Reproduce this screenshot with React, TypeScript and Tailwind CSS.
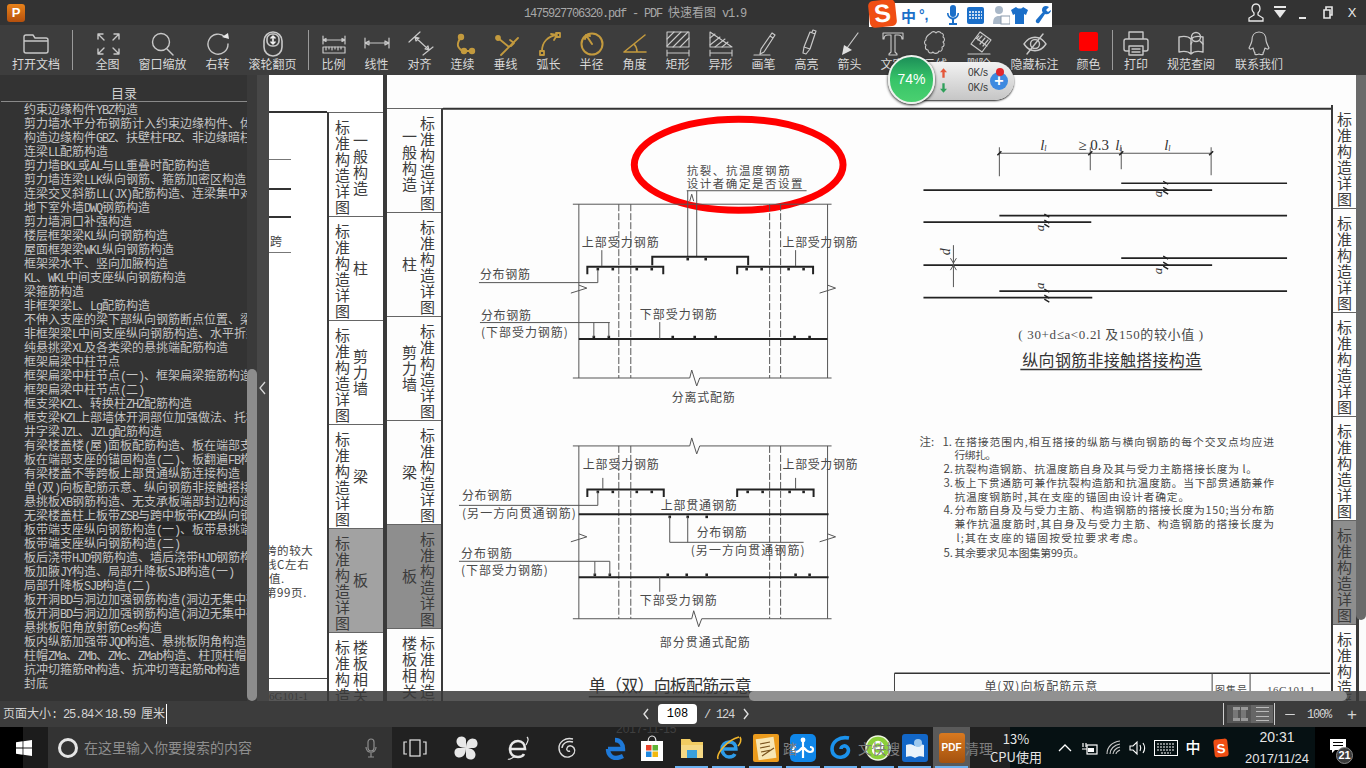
import React from 'react';

const CJK = '"Noto Sans CJK SC", "Liberation Sans", sans-serif';

const tocRows = [
  '约束边缘构件YBZ构造',
  '剪力墙水平分布钢筋计入约束边缘构件、体积配箍率',
  '构造边缘构件GBZ、扶壁柱FBZ、非边缘暗柱',
  '连梁LL配筋构造',
  '剪力墙BKL或AL与LL重叠时配筋构造',
  '剪力墙连梁LLK纵向钢筋、箍筋加密区构造',
  '连梁交叉斜筋LL(JX)配筋构造、连梁集中对角',
  '地下室外墙DWQ钢筋构造',
  '剪力墙洞口补强构造',
  '楼层框架梁KL纵向钢筋构造',
  '屋面框架梁WKL纵向钢筋构造',
  '框架梁水平、竖向加腋构造',
  'KL、WKL中间支座纵向钢筋构造',
  '梁箍筋构造',
  '非框架梁L、Lg配筋构造',
  '不伸入支座的梁下部纵向钢筋断点位置、梁',
  '非框架梁L中间支座纵向钢筋构造、水平折梁',
  '纯悬挑梁XL及各类梁的悬挑端配筋构造',
  '框架扁梁中柱节点',
  '框架扁梁中柱节点(一)、框架扁梁箍筋构造',
  '框架扁梁中柱节点(二)',
  '框支梁KZL、转换柱ZHZ配筋构造',
  '框支梁KZL上部墙体开洞部位加强做法、托柱',
  '井字梁JZL、JZLg配筋构造',
  '有梁楼盖楼(屋)面板配筋构造、板在端部支座',
  '板在端部支座的锚固构造(二)、板翻遍FB构造',
  '有梁楼盖不等跨板上部贯通纵筋连接构造',
  '单(双)向板配筋示意、纵向钢筋非接触搭接',
  '悬挑板XB钢筋构造、无支承板端部封边构造',
  '无梁楼盖柱上板带ZSB与跨中板带KZB纵向钢筋',
  '板带端支座纵向钢筋构造(一)、板带悬挑端',
  '板带端支座纵向钢筋构造(二)',
  '板后浇带HJD钢筋构造、墙后浇带HJD钢筋构造',
  '板加腋JY构造、局部升降板SJB构造(一)',
  '局部升降板SJB构造(二)',
  '板开洞BD与洞边加强钢筋构造(洞边无集中荷载',
  '板开洞BD与洞边加强钢筋构造(洞边无集中荷载',
  '悬挑板阳角放射筋Ces构造',
  '板内纵筋加强带JQD构造、悬挑板阴角构造',
  '柱帽ZMa、ZMb、ZMc、ZMab构造、柱顶柱帽',
  '抗冲切箍筋Rh构造、抗冲切弯起筋Rb构造',
  '封底',
];

const tabRows = [
  { name: '一般构造' },
  { name: '柱' },
  { name: '剪力墙' },
  { name: '梁' },
  { name: '板', active: true },
  { name: '楼板相关', top: true },
];

// SimSun draws latin at half width, so latin runs get squeezed to 6px a char
const Mixed = ({ text }: { text: string }) => (
  <>
    {text.split(/([\x00-\x7f]+)/).map((part, i) =>
      /^[\x00-\x7f]+$/.test(part) ? (
        <span key={i} className="tracking-[-1.2px] font-['Liberation_Mono']">{part}</span>
      ) : (
        <span key={i}>{part}</span>
      )
    )}
  </>
);

const Ico = ({ children, stroke = '#c8c8c8', w = 1.4 }: { children: React.ReactNode; stroke?: string; w?: number }) => (
  <svg width="32" height="32" viewBox="0 0 32 32" fill="none" stroke={stroke} strokeWidth={w} strokeLinecap="round" strokeLinejoin="round">
    {children}
  </svg>
);

const GOLD = '#c39a3e';

const toolbarGroups: { label: string; w: string; icon: React.ReactNode }[][] = [
  [
    {
      label: '打开文档', w: 'w-[72px]', icon: (
        <Ico><path d="M4 12a2 2 0 0 1 2-2h7l2 3h11a2 2 0 0 1 2 2v11a2 2 0 0 1-2 2H6a2 2 0 0 1-2-2zM4 16h24" /></Ico>
      ),
    },
  ],
  [
    {
      label: '全图', w: 'w-[55px]', icon: (
        <Ico><path d="M6 9h5M6 9v5M6 9l6 6M27 9h-5M27 9v5M27 9l-6 6M6 29h5M6 29v-5M6 29l6-6M27 29h-5M27 29v-5M27 29l-6-6" /></Ico>
      ),
    },
    {
      label: '窗口缩放', w: 'w-[55px]', icon: (
        <Ico><circle cx="14" cy="17" r="8.5" /><path d="M20 24l6 6" /></Ico>
      ),
    },
    {
      label: '右转', w: 'w-[55px]', icon: (
        <Ico>
          <path d="M23 12A10 10 0 1 0 26 19" />
          <path d="M20 12l6-4 1 6z" fill="#e8e8e8" stroke="none" />
        </Ico>
      ),
    },
    {
      label: '滚轮翻页', w: 'w-[55px]', icon: (
        <Ico w={1.6}>
          <rect x="7" y="7" width="18" height="24" rx="9" />
          <rect x="10" y="9" width="12" height="12" rx="5" />
          <path d="M16 11v8M14 13l2-2 2 2M14 17l2 2 2-2" stroke="#f0f0f0" />
        </Ico>
      ),
    },
  ],
  [
    {
      label: '比例', w: 'w-[43px]', icon: (
        <Ico w={1.2}>
          <path d="M5 11v8M27 11v8M5 15h22M5 15l3-1.5v3zM27 15l-3-1.5v3z" />
          <rect x="5" y="22" width="22" height="6" />
          <path d="M8 22v3M11 22v2M14 22v3M17 22v2M20 22v3M23 22v2" />
        </Ico>
      ),
    },
    {
      label: '线性', w: 'w-[43px]', icon: (
        <Ico w={1.2}><path d="M4 13v10M28 13v10M4 18h24M4 18l4-2v4zM28 18l-4-2v4z" /></Ico>
      ),
    },
    {
      label: '对齐', w: 'w-[43px]', icon: (
        <Ico w={1.2}><path d="M5 17L16 7M19 30l10-8M11 12l14 13M11 12l1 4 3-3zM25 25l-4-1 3-3z" /></Ico>
      ),
    },
    {
      label: '连续', w: 'w-[43px]', icon: (
        <Ico stroke={GOLD} w={2}>
          <path d="M14 12c-2 3-4 6-3 9 1 3 4 5 6 5h8" />
          <circle cx="14" cy="12" r="2.2" fill={GOLD} />
          <circle cx="17" cy="26" r="2.2" fill={GOLD} />
          <circle cx="25" cy="26" r="2.2" fill={GOLD} />
        </Ico>
      ),
    },
    {
      label: '垂线', w: 'w-[43px]', icon: (
        <Ico stroke={GOLD} w={1.8}>
          <path d="M11 30l17-17M8 13l11 9M20 15l4 3-3 3" />
          <circle cx="8" cy="13" r="2" fill={GOLD} />
        </Ico>
      ),
    },
    {
      label: '弧长', w: 'w-[43px]', icon: (
        <Ico stroke={GOLD} w={1.8}>
          <path d="M9 26c0-9 6-15 15-16M18 9l6 1-3 5" />
          <rect x="7" y="26" width="4" height="4" />
          <rect x="23" y="8" width="4" height="4" />
        </Ico>
      ),
    },
    {
      label: '半径', w: 'w-[43px]', icon: (
        <Ico stroke={GOLD} w={2}>
          <circle cx="16" cy="19" r="10.5" />
          <path d="M16 19L10 10M9 14l1-4 4 1" />
        </Ico>
      ),
    },
    {
      label: '角度', w: 'w-[43px]', icon: (
        <Ico stroke={GOLD} w={1.6}><path d="M5 27h22M5 27L26 10M15 19c2 2 3 5 3 8" /></Ico>
      ),
    },
    {
      label: '矩形', w: 'w-[43px]', icon: (
        <Ico w={1.1}>
          <rect x="5" y="7" width="22" height="15" />
          <path d="M5 14l7-7M5 21l14-14M11 22L26 7M18 22l9-9M5 25v6M27 25v6M5 28h22" />
        </Ico>
      ),
    },
    {
      label: '异形', w: 'w-[43px]', icon: (
        <Ico w={1.1}>
          <path d="M5 7l22 15H5z" />
          <path d="M5 13l5-4M5 20l10-8M10 22l10-8M17 22l6-5M5 25v6M27 25v6M5 28h22" />
        </Ico>
      ),
    },
    {
      label: '画笔', w: 'w-[43px]', icon: (
        <Ico w={1.2}><path d="M24 8l3 2-11 17-4 2 1-5zM22 11l3 2M6 30h16" /></Ico>
      ),
    },
    {
      label: '高亮', w: 'w-[43px]', icon: (
        <Ico w={1.2}><path d="M19 7l5 2-5 15-6-2zM21 7l1-2 3 1-1 3M13 22l-1 6 3 1 4-5" /></Ico>
      ),
    },
    {
      label: '箭头', w: 'w-[43px]', icon: (
        <Ico w={1.2}>
          <path d="M24 8L13 23" />
          <path d="M8 30l2-10 8 5z" fill="#e0e0e0" stroke="none" />
        </Ico>
      ),
    },
    {
      label: '文字', w: 'w-[43px]', icon: (
        <Ico w={1.1}><path d="M6 8h20v6h-1c0-3-1-4-4-4h-3v17l2 2v1h-8v-1l2-2V10h-3c-3 0-4 1-4 4H6z" /></Ico>
      ),
    },
    {
      label: '云线', w: 'w-[43px]', icon: (
        <Ico w={1.1}>
          <path d="M11 8a3 3 0 0 1 5 0 3 3 0 0 1 5 0c2 0 3 2 2 4 2 1 2 4 0 5 2 2 1 5-1 5 1 3-1 5-3 4-1 3-5 3-6 1-2 2-5 1-5-2-3 0-3-3-2-5-2-1-2-4 0-5-1-3 2-5 5-7z" />
        </Ico>
      ),
    },
    {
      label: '删除', w: 'w-[43px]', icon: (
        <Ico w={1.2}>
          <path d="M17 7l11 8-9 12-11-8zM13 13l11 8M5 29h22" />
          <path d="M16 11l-2 2M19 11l-4 4M22 13l-5 6M25 15l-5 6" />
        </Ico>
      ),
    },
  ],
  [
    {
      label: '隐藏标注', w: 'w-[69px]', icon: (
        <Ico><path d="M5 19c6-9 16-9 22 0-6 9-16 9-22 0z" /><circle cx="16" cy="19" r="4.5" /><path d="M24 9L8 29" /></Ico>
      ),
    },
    {
      label: '颜色', w: 'w-[39px]', icon: <div className="w-[19px] h-[19px] rounded-[2px] bg-[#ff0000] mt-[1px]" />,
    },
  ],
];

const toolbarEnd = [
  {
    label: '打印', w: 'w-[40px]', icon: (
      <Ico>
        <path d="M9 14V7h14v7M6 14h20a2 2 0 0 1 2 2v8a2 2 0 0 1-2 2h-3M9 26H6a2 2 0 0 1-2-2v-8a2 2 0 0 1 2-2" />
        <rect x="9" y="21" width="14" height="9" />
        <path d="M12 24h8M12 27h8" />
      </Ico>
    ),
  },
  {
    label: '规范查阅', w: 'w-[70px]', icon: (
      <Ico>
        <path d="M16 14c-3-3-8-3-12-2v15c4-1 9-1 12 2 3-3 8-3 12-2V12c-4-1-9-1-12 2zM16 14v15" />
        <circle cx="21" cy="12" r="4.5" />
        <path d="M17 17l-1 2M25 16l3 3" />
      </Ico>
    ),
  },
  {
    label: '联系我们', w: 'w-[66px]', icon: (
      <Ico w={1.2}>
        <path d="M16 7c-5 0-7 4-7 8 0 2-1 4-3 8 1 2 2 1 4 0 1 3 1 4 2 5-1 2 2 2 4 1 2 1 5 1 4-1 1-1 1-2 2-5 2 1 3 2 4 0-2-4-3-6-3-8 0-4-2-8-7-8z" />
      </Ico>
    ),
  },
];

const ToolItem = ({ item }: { item: { label: string; w: string; icon: React.ReactNode } }) => (
  <div className={`${item.w} shrink-0 flex flex-col items-center`}>
    <div className="h-[32px] flex items-center justify-center">{item.icon}</div>
    <span className="h-[14px] leading-[14px] text-[12px] text-[#d8d8d8] whitespace-nowrap">{item.label}</span>
  </div>
);

const Sep = () => <div className="w-px h-[40px] bg-[#9a9a9a] shrink-0 self-center" />;

const TitleBar = () => (
  <div className="h-[25px] bg-[#333333] flex items-center relative shrink-0">
    <div className="ml-[7px] w-[18px] h-[18px] rounded-[3px] bg-gradient-to-b from-[#e8821a] to-[#b5500d] flex items-center justify-center text-white text-[13px] font-bold leading-none font-['Liberation_Sans']">P</div>
    <span className="ml-[499px] text-[12px] text-[#a8a8a8] whitespace-nowrap"><Mixed text="1475927706320.pdf - PDF 快速看图 v1.9" /></span>
    <div className="ml-auto flex items-center text-[#e8e8e8]">
      <svg width="24" height="22" viewBox="0 0 24 22" fill="none" stroke="#e8e8e8" strokeWidth="1.3"><path d="M12 2c-3 0-4 2-4 5 0 2 1 3 2 4v2l-5 3v3h14v-3l-5-3v-2c1-1 2-2 2-4 0-3-1-5-4-5z" /></svg>
      <svg width="22" height="22" viewBox="0 0 22 22" fill="#e8e8e8" className="ml-[1px]"><path d="M5 4h12v2H5zM5 8h12l-6 8z" /></svg>
      <svg width="22" height="22" viewBox="0 0 22 22" fill="#e8e8e8" className="ml-[1px]"><path d="M7 15h7v2H7z" /></svg>
      <svg width="24" height="22" viewBox="0 0 24 22" fill="none" stroke="#e8e8e8" strokeWidth="1.6" className="ml-[1px]"><path d="M9 8h6v8H9zM11 8V5h6v8h-2" /></svg>
      <span className="w-[26px] text-center text-[13px] leading-none mr-[1px] font-['Liberation_Sans']">X</span>
    </div>
  </div>
);

const Toolbar = () => (
  <div className="h-[50px] bg-[#3d3d3d] flex shrink-0">
    <ToolItem item={toolbarGroups[0][0]} />
    <Sep />
    <div className="w-[7px] shrink-0" />
    {toolbarGroups[1].map((t) => <ToolItem key={t.label} item={t} />)}
    <div className="w-[8px] shrink-0" />
    <Sep />
    <div className="w-[3px] shrink-0" />
    {toolbarGroups[2].map((t) => <ToolItem key={t.label} item={t} />)}
    {toolbarGroups[3].map((t) => <ToolItem key={t.label} item={t} />)}
    <div className="w-[4px] shrink-0" />
    <Sep />
    <div className="w-[3px] shrink-0" />
    {toolbarEnd.map((t) => <ToolItem key={t.label} item={t} />)}
  </div>
);

const Sidebar = () => (
  <div className="w-[269px] shrink-0 flex bg-[#333333] overflow-hidden">
    <div className="w-[247px] shrink-0 overflow-hidden">
      <div className="h-[27px] border-b border-[#8a8a8a] flex items-center justify-center text-[13px] text-[#d0d0d0] pt-[10px] ml-px">目录</div>
      {tocRows.map((row, i) => (
        <div
          key={i}
          className={`h-[14px] leading-[14px] text-[12px] text-[#c4c4c4] whitespace-nowrap pl-[24px] ${i === 30 ? 'bg-[linear-gradient(90deg,#333333_21px,#292929_21px)]' : ''}`}
        >
          <Mixed text={row} />
        </div>
      ))}
    </div>
    <div className="w-[10px] shrink-0 bg-[#3a3a3a] flex flex-col justify-end">
      <div className="h-[332px] rounded-full bg-[#8c8c8c]" />
    </div>
    <div className="w-[12px] shrink-0 bg-[#474747] flex flex-col justify-center items-center">
      <svg width="10" height="14" viewBox="0 0 10 14" fill="none" stroke="#d8d8d8" strokeWidth="1.3"><path d="M7 1L2 7l5 6" /></svg>
    </div>
  </div>
);

const VText = ({ text, className = '' }: { text: string; className?: string }) => (
  <div className={`[writing-mode:vertical-rl] text-[15px] leading-[17px] tracking-[1px] w-[17px] whitespace-nowrap ${className}`}>
    {text}
  </div>
);

// side index of a page: the section name and the 标准构造详图 column
const TabCol = ({ side, className }: { side: 'left' | 'right'; className: string }) => (
  <div className={`flex flex-col shrink-0 ${className}`}>
    {tabRows.map((row) => {
      const nameCol = (
        <div className={`flex ${row.top ? 'pt-[7px] items-start' : 'items-center'}`}><VText text={row.name} /></div>
      );
      return (
        <div
          key={row.name}
          className={`h-[104px] shrink-0 border-b border-[#666666] flex gap-[1px] text-[#3c3c3c] ${side === 'left' ? 'pl-[5px]' : 'pl-[14px]'} ${row.active ? (side === 'left' ? 'bg-[#a2a2a2]' : 'bg-[#8e8e8e]') : ''}`}
        >
          {side === 'right' && nameCol}
          <VText text="标准构造详图" className="pt-[7px]" />
          {side === 'left' && nameCol}
        </div>
      );
    })}
  </div>
);

const Txt = ({ x, y, w, s = 12, c = '#4a4a4a', serif, italic, rot, children }: { x: number; y: number; w?: number; s?: number; c?: string; serif?: boolean; italic?: boolean; rot?: number; children: React.ReactNode }) => (
  <text
    x={x}
    y={y}
    dominantBaseline="central"
    fontSize={s}
    fill={c}
    stroke="none"
    fontStyle={italic ? 'italic' : undefined}
    fontFamily={serif ? '"Liberation Serif", "Noto Sans CJK SC", serif' : CJK}
    textLength={w}
    lengthAdjust={w ? 'spacing' : undefined}
    transform={rot ? `rotate(${rot} ${x} ${y})` : undefined}
  >
    {children}
  </text>
);

const Dots = ({ xs, y }: { xs: number[]; y: number }) => (
  <>
    {xs.map((x) => <rect key={x} x={x - 1.3} y={y - 1.3} width="2.6" height="2.6" fill="#222" stroke="none" />)}
  </>
);

const zigH = (x1: number, x2: number, y: number, zx: number) =>
  `M${x1} ${y}H${zx - 3}L${zx - 1} ${y - 8}L${zx + 4} ${y + 8}L${zx + 7} ${y}H${x2}`;

const zigV = (x: number, y: number) => `M${x - 8} ${y + 5}L${x + 8} ${y}L${x} ${y - 3}`;

// the scanned drawing of the page, drawn in screen coordinates
const PageDrawing = () => (
  <svg viewBox="443 75 889 626" className="absolute inset-0 w-full h-full" fill="none" stroke="#555" strokeWidth="1">
    <path d="M443 108.5H1332" stroke="#333" strokeWidth="2" />
    <path d="M895 673.5H1331" stroke="#333" strokeWidth="1.6" />
    <path d="M1213 673.5V701M1251 673.5V701M895 673.5V701" stroke="#444" />

    {/* top detail */}
    <ellipse cx="739" cy="164.500" rx="104.500" ry="45.500" stroke="#ff0000" strokeWidth="7" />
    <Txt x={687} y={170} w={103} s={11.5}>抗裂、抗温度钢筋</Txt>
    <Txt x={687} y={182.5} w={116} s={11.5}>设计者确定是否设置</Txt>
    <path d="M687 190.5H807M688 190.5V256M697 190.5V256" />
    <path d="M690 201l2-7 2 7" />
    <path d="M573 204H832M579 204V378M828 204V378" />
    <path d="M573 378H690L692 370L697 386L700 378H832" />
    <path d="M619 204V378M631 204V378M770 204V378M781 204V378" strokeDasharray="7 2" />
    <path d={zigV(579, 288)} /><path d={zigV(828, 288)} />
    <path d="M587.5 274V266.5H663.5V274M652.5 265V256.5H748.5V265M737.5 274V266.5H813.5V274" stroke="#222" strokeWidth="2" />
    <Dots xs={[598, 613, 637, 652, 747, 762, 789, 804]} y={269} />
    <Dots xs={[688, 706]} y={259} />
    <path d="M579 339H828" stroke="#222" strokeWidth="2" />
    <Dots xs={[594, 609, 673, 695, 716, 795, 810]} y={337} />
    <Txt x={582} y={241} w={77}>上部受力钢筋</Txt>
    <Txt x={783} y={241} w={75}>上部受力钢筋</Txt>
    <path d="M602 250V266M796 250V266" />
    <Txt x={480} y={273} w={50}>分布钢筋</Txt>
    <path d="M479 282.5H598V270" />
    <Txt x={481} y={314} w={50}>分布钢筋</Txt>
    <Txt x={481} y={331} w={87}>(下部受力钢筋)</Txt>
    <path d="M480 322.5H610M594 322.5V337M609 322.5V337" />
    <Txt x={640} y={313} w={77}>下部受力钢筋</Txt>
    <path d="M660 322V339" />
    <Txt x={672} y={397} w={63}>分离式配筋</Txt>

    {/* lower detail */}
    <path d={zigH(573, 832, 446, 693)} />
    <path d={zigH(573, 832, 619, 695)} />
    <path d="M579 446V619M828 446V619" />
    <path d="M619 446V619M631 446V619M770 446V619M781 446V619" strokeDasharray="7 2" />
    <path d={zigV(579, 537)} /><path d={zigV(828, 537)} />
    <path d="M587.5 497V489.5H664V497M737.5 497V489.5H814V497" stroke="#222" strokeWidth="2" />
    <Dots xs={[598, 613, 637, 652, 748, 763, 790, 804]} y={492} />
    <path d="M579 514.5H829M579 577.5H829" stroke="#222" strokeWidth="2" />
    <Dots xs={[670, 688, 707]} y={517} />
    <Dots xs={[595, 610, 668, 687, 707, 796, 810]} y={575} />
    <path d="M670 517V542.5H804M688 517V542.5" />
    <Txt x={697} y={532} w={50}>分布钢筋</Txt>
    <Txt x={691} y={550} w={114}>(另一方向贯通钢筋)</Txt>
    <Txt x={661} y={505} w={76}>上部贯通钢筋</Txt>
    <path d="M459 561.5H610M595 561.5V575M610 561.5V575" />
    <Txt x={461} y={553} w={51}>分布钢筋</Txt>
    <Txt x={461} y={570} w={87}>(下部受力钢筋)</Txt>
    <path d="M459 505.5H598V492" />
    <Txt x={462} y={495} w={50}>分布钢筋</Txt>
    <Txt x={462} y={513} w={114}>(另一方向贯通钢筋)</Txt>
    <Txt x={583} y={464} w={76}>上部受力钢筋</Txt>
    <Txt x={783} y={464} w={75}>上部受力钢筋</Txt>
    <path d="M603 478V489M796 478V489" />
    <Txt x={640} y={600} w={77}>下部受力钢筋</Txt>
    <path d="M660 577V592" />
    <Txt x={660} y={642} w={90}>部分贯通式配筋</Txt>
    <Txt x={589} y={685} w={163} s={17} c="#333">单（双）向板配筋示意</Txt>
    <path d="M589 697H752" stroke="#222" strokeWidth="1.5" />

    {/* right detail */}
    <path d="M1000 153H1212M1000 147V176M1091 147V170M1122 147V169M1212 147V175" />
    <path d="M998 155l4-4M1089 155l4-4M1120 155l4-4M1210 155l4-4" stroke="#222" strokeWidth="1.6" />
    <Txt x={1041} y={145} s={15} c="#333" serif italic>l</Txt>
    <Txt x={1045} y={148} s={8} c="#333" serif italic>l</Txt>
    <Txt x={1079} y={145} s={15} c="#333" serif>≥ 0.3</Txt>
    <Txt x={1116} y={145} s={15} c="#333" serif italic>l</Txt>
    <Txt x={1120} y={148} s={8} c="#333" serif italic>l</Txt>
    <Txt x={1165} y={145} s={15} c="#333" serif italic>l</Txt>
    <Txt x={1169} y={148} s={8} c="#333" serif italic>l</Txt>
    <path d="M1122 183H1288M924 190H1213M1000 215.5H1288M924 222H1092M1122 258H1288M924 265H1213M1000 291H1288M924 297.5H1093" stroke="#222" strokeWidth="1.7" />
    <path d="M954 245V287M951 258l3 5 3-5M951 270l3-5 3 5" />
    <path d="M1164 181l5 3M1164 187l5 3M1164 191l5 3M1045 214l5 3M1045 220l5 3M1045 224l5 3M1164 256l5 3M1164 262l5 3M1164 266l5 3M1045 289l5 3M1045 295l5 3M1045 299l5 3" stroke="#222" strokeWidth="1.4" />
    <Txt x={1158} y={197} s={13} c="#333" serif italic rot={-90}>a</Txt>
    <Txt x={1040} y={231} s={13} c="#333" serif italic rot={-90}>a</Txt>
    <Txt x={1158} y={274} s={13} c="#333" serif italic rot={-90}>a</Txt>
    <Txt x={1040} y={289} s={13} c="#333" serif italic rot={-90}>a</Txt>
    <Txt x={946} y={255} s={14} c="#333" serif italic rot={-90}>d</Txt>
    <Txt x={1019} y={334} w={185} s={13} serif>( 30+d≤a&lt;0.2l 及150的较小值 )</Txt>
    <Txt x={1023} y={359} w={179} s={16} c="#333">纵向钢筋非接触搭接构造</Txt>
    <path d="M1021 369.5H1203" stroke="#333" strokeWidth="1.5" />

    {/* notes */}
    <Txt x={920} y={441} s={11.5}>注:</Txt>
    <Txt x={943} y={441} s={11.5}>1.</Txt>
    <Txt x={955} y={441} w={320} s={10.8}>在搭接范围内,相互搭接的纵筋与横向钢筋的每个交叉点均应进</Txt>
    <Txt x={955} y={454} w={42} s={10.8}>行绑扎。</Txt>
    <Txt x={944} y={468} s={11.5}>2.</Txt>
    <Txt x={955} y={468} w={303} s={10.8}>抗裂构造钢筋、抗温度筋自身及其与受力主筋搭接长度为 l。</Txt>
    <Txt x={944} y={482} s={11.5}>3.</Txt>
    <Txt x={955} y={482} w={320} s={10.8}>板上下贯通筋可兼作抗裂构造筋和抗温度筋。当下部贯通筋兼作</Txt>
    <Txt x={955} y={496} w={235} s={10.8}>抗温度钢筋时,其在支座的锚固由设计者确定。</Txt>
    <Txt x={944} y={509} s={11.5}>4.</Txt>
    <Txt x={955} y={509} w={320} s={10.8}>分布筋自身及与受力主筋、构造钢筋的搭接长度为150;当分布筋</Txt>
    <Txt x={955} y={523} w={320} s={10.8}>兼作抗温度筋时,其自身及与受力主筋、构造钢筋的搭接长度为</Txt>
    <Txt x={957} y={537} w={188} s={10.8}>l;其在支座的锚固按受拉要求考虑。</Txt>
    <Txt x={944} y={552} s={11.5}>5.</Txt>
    <Txt x={955} y={552} w={130} s={10.8}>其余要求见本图集第99页。</Txt>

    <Txt x={985} y={686} w={113} s={12}>单(双)向板配筋示意</Txt>
    <Txt x={1216} y={690} w={32} s={10}>图集号</Txt>
    <Txt x={1268} y={690} w={48} s={11} serif>16G101-1</Txt>
  </svg>
);

const DocArea = () => (
  <div className="flex-1 relative overflow-hidden flex bg-[#3a3a3a]">
    {/* previous page */}
    <div className="w-[114px] shrink-0 bg-white flex relative text-[#444444]">
      <div className="w-[58px] shrink-0 relative overflow-hidden">
        <div className="absolute left-0 right-0 top-[36px] h-[2px] bg-[#333333]" />
        <div className="absolute left-0 w-[22px] top-[84px] h-px bg-[#777777]" />
        <div className="absolute left-0 w-[22px] top-[113px] h-[2px] bg-[#333333]" />
        <div className="absolute left-0 w-[22px] top-[141px] h-[2px] bg-[#333333]" />
        <div className="absolute left-0 w-[22px] top-[177px] h-px bg-[#777777]" />
        <span className="absolute left-[1px] top-[158px] text-[12px] leading-[16px]">跨</span>
        <div className="absolute left-0 top-[468px] text-[11.5px] leading-[14px] whitespace-nowrap tracking-[0.6px]">
          <div className="ml-[-4px]">跨的较大</div>
          <div className="ml-[-4px]">线C左右</div>
          <div>值.</div>
          <div className="ml-[-4px]">第99页.</div>
        </div>
        <div className="absolute left-0 right-0 top-[603px] h-px bg-[#444444]" />
        <span className="absolute left-0 top-[614px] text-[11px] leading-[14px] whitespace-nowrap font-['Liberation_Serif']">6G101-1</span>
      </div>
      <TabCol side="left" className="w-[56px] mt-[37px] border-l-2 border-[#3a3a3a] border-t border-t-[#666666]" />
    </div>
    <div className="w-[4px] shrink-0" />
    {/* current page */}
    <div className="w-[969px] shrink-0 bg-[#fdfdfd] flex">
      <TabCol side="right" className="w-[56px] mt-[33px] border-r-2 border-[#3a3a3a] border-t border-t-[#666666]" />
      <div className="flex-1 relative"><PageDrawing /></div>
      <div className="w-[25px] shrink-0 mt-[30px] border-l-2 border-[#3a3a3a] flex flex-col">
        {tabRows.map((row) => (
          <div key={row.name} className={`h-[104px] shrink-0 border-b border-[#666666] text-[#3c3c3c] flex justify-center ${row.active ? 'bg-[#8e8e8e]' : ''}`}>
            <VText text="标准构造详图" className="pt-[7px]" />
          </div>
        ))}
      </div>
    </div>
    <div className="w-[3px] shrink-0" />
    <div className="w-[7px] shrink-0 bg-[#fbfbfb]" />

    {/* scroll bars over the page */}
    <div className="absolute right-0 top-0 w-[10px] h-[545px] rounded-b-full bg-[#6a6a6a]" />
    <div className="absolute left-0 right-0 bottom-0 h-[10px] bg-[#3a3a3a]/85">
      <div className="absolute left-[480px] w-[598px] top-0 bottom-0 rounded-full bg-[#919191]" />
    </div>
  </div>
);

const StatusBar = () => (
  <div className="h-[26px] bg-[#3c3c3c] flex items-center shrink-0 text-[#d4d4d4]">
    <div className="w-[640px] shrink-0 pl-[3px] flex items-center text-[12px] whitespace-nowrap">
      <span><Mixed text="页面大小: 25.84×18.59 厘米" /></span>
      <span className="inline-block w-px h-[20px] bg-white ml-[1px]" />
    </div>
    <svg width="12" height="14" viewBox="0 0 12 14" fill="none" stroke="#e0e0e0" strokeWidth="1.4" className="shrink-0"><path d="M8 2L4 7l4 5" /></svg>
    <div className="w-[39px] h-[20px] ml-[6px] shrink-0 rounded-[4px] bg-white text-black text-[12px] leading-[20px] text-center font-['Liberation_Mono']">108</div>
    <span className="ml-[7px] text-[12px] whitespace-nowrap"><Mixed text="/ 124" /></span>
    <svg width="12" height="14" viewBox="0 0 12 14" fill="none" stroke="#e0e0e0" strokeWidth="1.4" className="ml-[6px] shrink-0"><path d="M4 2l4 5-4 5" /></svg>
    <div className="w-px h-[22px] bg-[#cfcfcf] ml-[471px] shrink-0" />
    <div className="w-[46px] h-[18px] ml-[3px] flex shrink-0 bg-[#666666]">
      <div className="w-[24px] bg-[#555555] flex justify-center gap-[3px] py-[2px]">
        <div className="w-[5px] border-y-[3px] border-dotted border-[#999999] bg-[#777777]" />
        <div className="w-[5px] border-y-[3px] border-dotted border-[#999999] bg-[#777777]" />
      </div>
      <div className="flex-1 flex flex-col items-center justify-center gap-[4px]">
        <div className="w-[13px] h-[5px] border-y border-[#bbbbbb]" />
        <div className="w-[13px] h-[5px] border-y border-[#bbbbbb]" />
      </div>
    </div>
    <div className="w-px h-[22px] bg-[#cfcfcf] ml-[1px] shrink-0" />
    <span className="w-[16px] ml-[7px] h-px bg-[#d4d4d4] shrink-0 scale-x-[0.6]" />
    <span className="ml-[9px] text-[12px] whitespace-nowrap"><Mixed text="100%" /></span>
    <span className="ml-[16px] text-[17px] leading-none font-['Liberation_Sans']">+</span>
  </div>
);

const cells: { className: string; open?: boolean; active?: boolean; icon: React.ReactNode }[] = [
  {
    className: 'w-[46px]', icon: (
      <svg width="26" height="18" viewBox="0 0 26 18" fill="none" stroke="#e8e8e8" strokeWidth="1.2"><rect x="8" y="1" width="10" height="16" /><path d="M5 3H2v12h3M21 3h3v12h-3" /></svg>
    ),
  },
  {
    className: 'w-[56px]', icon: (
      <svg width="24" height="26" viewBox="0 0 24 26" fill="#e8e8e8"><path d="M12 13C5 13 1 9 3 4c2-4 9-3 9 1zM12 13c0-7 4-11 9-9 4 2 3 9-1 9zM12 13c7 0 11 4 9 9-2 4-9 3-9-1zM12 13c0 7-4 11-9 9-4-2-3-9 1-9z" /></svg>
    ),
  },
  {
    className: 'w-[48px]', icon: (
      <svg width="24" height="26" viewBox="0 0 24 26" fill="none" stroke="#e8e8e8" strokeWidth="2.6"><path d="M4 14h15c0-5-3-8-7-8s-8 3-8 8 3 8 8 8c3 0 5-1 6-3" /><path d="M2 24c1 1 3 0 7-3M21 2c2 2 1 4-1 8" strokeWidth="1.2" /></svg>
    ),
  },
  {
    className: 'w-[50px]', icon: (
      <svg width="22" height="24" viewBox="0 0 22 24" fill="none" stroke="#dddddd" strokeWidth="1.4"><path d="M17 3C9 1 3 6 3 12c0 6 5 10 10 9 5-1 7-6 5-9-2-3-6-3-7 0-1 2 1 4 3 3" /><path d="M17 6c-6-2-11 2-11 6" /></svg>
    ),
  },
  {
    className: 'w-[36px] ml-[6px]', icon: (
      <svg width="22" height="24" viewBox="0 0 22 24" fill="none" stroke="#1e79d8" strokeWidth="4.4"><path d="M3 13h15c0-5-3-9-8-9M3 13c0 6 4 9 8 9 3 0 5-1 7-2" /></svg>
    ),
  },
  {
    className: 'w-[36px]', icon: (
      <svg width="24" height="28" viewBox="0 0 24 28">
        <path d="M8 8c0-8 8-8 8 0" fill="none" stroke="#f0f0f0" strokeWidth="1.2" />
        <rect x="1" y="7" width="22" height="20" fill="#ffffff" />
        <rect x="6" y="11" width="5.5" height="5.5" fill="#e8412a" />
        <rect x="12.5" y="11" width="5.5" height="5.5" fill="#5fb336" />
        <rect x="6" y="17.5" width="5.5" height="5.5" fill="#1e88e0" />
        <rect x="12.5" y="17.5" width="5.5" height="5.5" fill="#f2b90f" />
      </svg>
    ),
  },
  {
    className: 'w-[37px] ml-[3px]', open: true, icon: (
      <svg width="26" height="24" viewBox="0 0 26 24">
        <path d="M2 3h9l2 3h11v16H2z" fill="#f1cc62" />
        <rect x="2" y="9" width="22" height="13" fill="#f5d985" />
        <rect x="8" y="14" width="10" height="8" fill="#3aa0dc" />
      </svg>
    ),
  },
  {
    className: 'w-[37px]', open: true, icon: (
      <svg width="28" height="28" viewBox="0 0 28 28" fill="none" stroke="#2e9be8" strokeWidth="3.4"><path d="M7 15h14c0-5-3-7-7-7s-7 3-7 7 3 8 7 8c3 0 5-1 6-3" /><path d="M3 25C1 20 12 6 24 3M25 3c2 3 0 7-2 9" stroke="#f0b52c" strokeWidth="1.6" /></svg>
    ),
  },
  {
    className: 'w-[37px]', open: true, icon: (
      <svg width="28" height="30" viewBox="0 0 28 30">
        <rect x="1" y="1" width="26" height="28" rx="2" fill="#eb9b1c" />
        <rect x="5" y="5" width="18" height="21" fill="#f7e6b4" transform="rotate(-8 14 15)" />
        <path d="M8 11l10-2M8 15l10-2M9 19l10-2M10 23l12-8" stroke="#7a5520" strokeWidth="1.2" />
      </svg>
    ),
  },
  {
    className: 'w-[38px]', open: true, icon: (
      <svg width="28" height="30" viewBox="0 0 28 30">
        <rect x="1" y="1" width="26" height="28" rx="5" fill="#0f86e8" />
        <path d="M14 5v20M7 14c-4 0-4 5 0 5s6-5 7-5 3 5 7 5 4-5 0-5" stroke="#ffffff" strokeWidth="2.2" fill="none" />
        <circle cx="14" cy="7" r="2.4" fill="#ffffff" />
      </svg>
    ),
  },
  {
    className: 'w-[37px]', open: true, icon: (
      <svg width="24" height="26" viewBox="0 0 24 26" fill="none" stroke="#1b92ec" strokeWidth="3.6"><path d="M20 3C10 1 3 7 3 14c0 6 5 9 10 8 6-1 8-7 5-10-2-2-6-1-6 2" /></svg>
    ),
  },
  {
    className: 'w-[37px]', open: true, icon: (
      <svg width="26" height="30" viewBox="0 0 26 30">
        <circle cx="13" cy="15" r="12" fill="#8ccf3a" stroke="#eef6e0" strokeWidth="1.5" />
        <path d="M8 15h10M8 15c0-4 3-6 5-6s5 2 5 5M8 16c0 4 3 5 5 5s4-1 5-3" stroke="#ffffff" strokeWidth="2.4" fill="none" />
      </svg>
    ),
  },
  {
    className: 'w-[37px]', open: true, icon: (
      <svg width="28" height="30" viewBox="0 0 28 30">
        <rect x="1" y="1" width="26" height="28" rx="3" fill="#1267c8" />
        <path d="M14 13c-3-2-6-2-9-1v12c3-1 6-1 9 1 3-2 6-2 9-1V12c-3-1-6-1-9 1z" fill="#eaf3fb" />
        <circle cx="17" cy="10" r="4" fill="#9fc9ee" />
      </svg>
    ),
  },
  {
    className: 'w-[37px]', open: true, active: true, icon: (
      <div className="w-[26px] h-[30px] rounded-[3px] bg-gradient-to-b from-[#d9791f] to-[#a4520f] flex items-center justify-center text-white text-[10px] font-bold font-['Liberation_Sans']">PDF</div>
    ),
  },
];

const Tray = ({ w, children }: { w: string; children: React.ReactNode }) => (
  <div className={`${w} shrink-0 flex items-center justify-center text-white`}>{children}</div>
);

const Taskbar = () => (
  <div className="h-[41px] flex shrink-0 bg-[#212121] relative overflow-hidden">
    <div className="w-[48px] shrink-0 bg-[linear-gradient(90deg,#000000_23px,#1c1c1c_23px)] flex items-center pl-[16px]">
      <svg width="16" height="16" viewBox="0 0 16 16" fill="#ffffff"><path d="M0 2.2l6.6-.9V7.6H0zM7.4 1.2L16 0v7.6H7.4zM0 8.4h6.6v6.3L0 13.8zM7.4 8.4H16V16l-8.6-1.2z" /></svg>
    </div>
    <div className="w-[344px] shrink-0 bg-[#333333] flex items-center">
      <div className="w-[20px] h-[20px] ml-[10px] rounded-full border-[3px] border-[#e4e4e4]" />
      <span className="ml-[6px] text-[14px] text-[#8e8e8e] whitespace-nowrap">在这里输入你要搜索的内容</span>
      <svg width="14" height="20" viewBox="0 0 14 20" fill="none" stroke="#8e8e8e" strokeWidth="1.2" className="ml-auto mr-[14px]"><rect x="4" y="1" width="6" height="12" rx="3" /><path d="M2 9c0 7 10 7 10 0M7 15v4M4 19h6" /></svg>
    </div>
    {cells.map((cell, i) => (
      <div key={i} className={`${cell.className} shrink-0 h-full relative flex items-center justify-center ${cell.active ? 'bg-[#5a5a5a]' : ''}`}>
        {cell.icon}
        {cell.open && <div className="absolute bottom-0 left-[2px] right-[2px] h-[2px] bg-[#6cb2f2]" />}
      </div>
    ))}
    <div className="w-[11px] shrink-0" />
    <div className="w-[70px] shrink-0 bg-[linear-gradient(90deg,#212121_29px,#061113_29px)] flex flex-col items-center justify-center text-[13px] leading-[18px] text-[#e6e6e6]">
      <span>13%</span>
      <span className="whitespace-nowrap">CPU使用</span>
    </div>
    <div className="flex-1 bg-[#061113] flex items-center">
      <Tray w="w-[28px]"><svg width="14" height="10" viewBox="0 0 14 10" fill="none" stroke="#fff" strokeWidth="1.3"><path d="M1 8l6-6 6 6" /></svg></Tray>
      <Tray w="w-[22px]"><svg width="18" height="16" viewBox="0 0 18 16" fill="none" stroke="#fff" strokeWidth="1.2"><rect x="6" y="5" width="10" height="9" /><path d="M1 9h5M2 3v4M5 3v4" /><rect x="7" y="8" width="6" height="4" fill="#fff" stroke="none" /></svg></Tray>
      <Tray w="w-[26px]"><svg width="16" height="16" viewBox="0 0 16 16" fill="none" stroke="#c8c8c8" strokeWidth="1.1"><path d="M1 14c0-7 5-12 13-13M4 14c0-5 4-9 10-10M7 14c0-3 3-6 7-7M10 14c0-2 2-3 4-4" /></svg></Tray>
      <Tray w="w-[22px]"><svg width="18" height="16" viewBox="0 0 18 16" fill="none" stroke="#fff" strokeWidth="1.1"><path d="M1 6v4h3l4 4V2L4 6zM11 5c1 2 1 4 0 6M14 3c2 3 2 7 0 10" /></svg></Tray>
      <Tray w="w-[34px]"><svg width="24" height="16" viewBox="0 0 24 16" fill="none" stroke="#fff" strokeWidth="1"><rect x="0.5" y="0.5" width="23" height="15" /><path d="M3 4h18M3 7h18M3 10h18M7 13h10" strokeDasharray="2 1" /></svg></Tray>
      <Tray w="w-[20px]"><span className="text-[15px] font-medium">中</span></Tray>
      <Tray w="w-[36px]"><div className="w-[14px] h-[18px] rounded-[3px] bg-[#f04e14] -rotate-6 flex items-center justify-center text-white text-[13px] font-bold leading-none font-['Liberation_Sans']">S</div></Tray>
      <div className="w-[76px] shrink-0 flex flex-col items-center text-[13px] leading-[21px] text-[#e6e6e6] font-['Liberation_Sans']">
        <span className="text-[14px]">20:31</span>
        <span className="whitespace-nowrap">2017/11/24</span>
      </div>
      <div className="flex-1 h-full bg-black flex items-center justify-center relative pb-[4px]">
        <svg width="16" height="14" viewBox="0 0 16 14" fill="#fff" className="mr-[6px]"><path d="M0 0h16v11H5l-3 3v-3H0zM3 3v1h10V3zM3 6v1h10V6z" fillRule="evenodd" /></svg>
        <div className="absolute left-[21px] top-[20px] w-[17px] h-[17px] rounded-full bg-[#3a3a3a] border border-[#8a8a8a] text-white text-[11px] font-bold leading-[15px] text-center font-['Liberation_Sans']">21</div>
      </div>
    </div>
    {/* window behind shows through the translucent bar */}
    <span className="absolute left-[616px] top-[-5px] text-[12px] leading-[14px] text-[#3f3f3f] font-['Liberation_Sans']">2017-11-15</span>
    <span className="absolute left-[783px] top-[13px] text-[14px] leading-[16px] text-[#7e7e7e]">踏</span>
    <span className="absolute left-[858px] top-[13px] text-[14px] leading-[16px] text-[#7e7e7e]">文快搜</span>
    <span className="absolute left-[965px] top-[13px] text-[14px] leading-[16px] text-[#7e7e7e]">清理</span>
  </div>
);

const SogouBar = () => (
  <div className="absolute left-[869px] top-[3px] w-[183px] h-[24px] bg-white flex items-center text-[#1b6fc9]">
    <div className="w-[27px] h-[27px] -mt-[3px] rounded-[5px] bg-[#f04e14] -rotate-6 flex items-center justify-center text-white text-[25px] font-black leading-none font-['Liberation_Sans']">S</div>
    <span className="ml-[5px] text-[15px] font-bold leading-none">中</span>
    <span className="ml-[3px] w-[8px] text-[14px] font-bold leading-none font-['Liberation_Sans']">°,</span>
    <svg width="14" height="22" viewBox="0 0 14 22" className="ml-[19px]" fill="#1b6fc9"><rect x="4" y="1" width="6" height="12" rx="3" /><path d="M1 9h1.5c0 6 9 6 9 0H13c0 4-3 6-5 6.500V19h3v2H3v-2h3v-3.500C4 15 1 13 1 9z" /></svg>
    <svg width="17" height="17" viewBox="0 0 17 17" className="ml-[7px]"><rect width="17" height="17" rx="2" fill="#1b6fc9" /><path d="M2 5h13M2 8h13M2 11h13" stroke="#fff" strokeWidth="1.5" strokeDasharray="2 1" /></svg>
    <svg width="18" height="20" viewBox="0 0 18 20" className="ml-[8px]"><circle cx="7" cy="5" r="4" fill="#a9b8c8" /><path d="M1 19c0-6 2-8 6-8s4 2 4 8z" fill="#a9b8c8" /><rect x="9" y="11" width="9" height="8" fill="#fff" stroke="#8a9aab" /></svg>
    <svg width="19" height="19" viewBox="0 0 19 19" fill="#1b6fc9"><path d="M6 1L1 4l2 5 2-1v10h9V8l2 1 2-5-5-3c-1 2-5 2-7 0z" /></svg>
    <svg width="17" height="20" viewBox="0 0 17 20" className="ml-[5px]" fill="#1b6fc9"><path d="M15 2c-3-2-7-1-7 3 0 1 0 2 1 2L2 15c-1 2 1 4 3 3l6-9c3 1 6-1 6-4l-3 2-2-2z" /></svg>
  </div>
);

const NetWidget = () => (
  <div className="absolute left-[888px] top-[55px] w-[126px] h-[49px]">
    <div className="absolute left-[22px] right-0 top-[7px] h-[38px] rounded-r-full bg-gradient-to-b from-[#f2f2f2] to-[#c6c6c6] shadow-[0_1px_2px_#222]">
      <svg width="7" height="10" viewBox="0 0 9 12" className="absolute left-[30px] top-[6px]" fill="#e4573a"><path d="M4.500 0L9 5H6v7H3V5H0z" /></svg>
      <svg width="7" height="10" viewBox="0 0 9 12" className="absolute left-[30px] top-[21px]" fill="#2fa05a"><path d="M4.500 12L0 7h3V0h3v7h3z" /></svg>
      <span className="absolute left-[58px] top-[4px] text-[10px] leading-[14px] text-[#333333] font-['Liberation_Sans']">0K/s</span>
      <span className="absolute left-[58px] top-[19px] text-[10px] leading-[14px] text-[#333333] font-['Liberation_Sans']">0K/s</span>
      <div className="absolute left-[80px] top-[10px] w-[18px] h-[18px] rounded-full bg-[#3e8ae0] text-white text-[16px] font-bold leading-[17px] text-center font-['Liberation_Sans']">+</div>
      <div className="absolute left-[86px] top-[6px] w-[8px] h-[8px] rounded-full bg-[#e0252b]" />
    </div>
    <div className="absolute left-0 top-0 w-[47px] h-[49px] rounded-full border-[2px] border-[#eef2ee] bg-gradient-to-b from-[#1c8f58] via-[#37c468] to-[#4ad070] flex items-center justify-center text-white text-[14px] font-['Liberation_Sans'] shadow-[0_1px_3px_#111]">
      74%
    </div>
  </div>
);

const App = () => (
  <div className="w-[1366px] h-[768px] relative overflow-hidden flex flex-col bg-[#333333]" style={{ fontFamily: CJK }}>
    <TitleBar />
    <Toolbar />
    <div className="h-[626px] flex shrink-0">
      <Sidebar />
      <DocArea />
    </div>
    <StatusBar />
    <Taskbar />
    <SogouBar />
    <NetWidget />
  </div>
);

export default App;
